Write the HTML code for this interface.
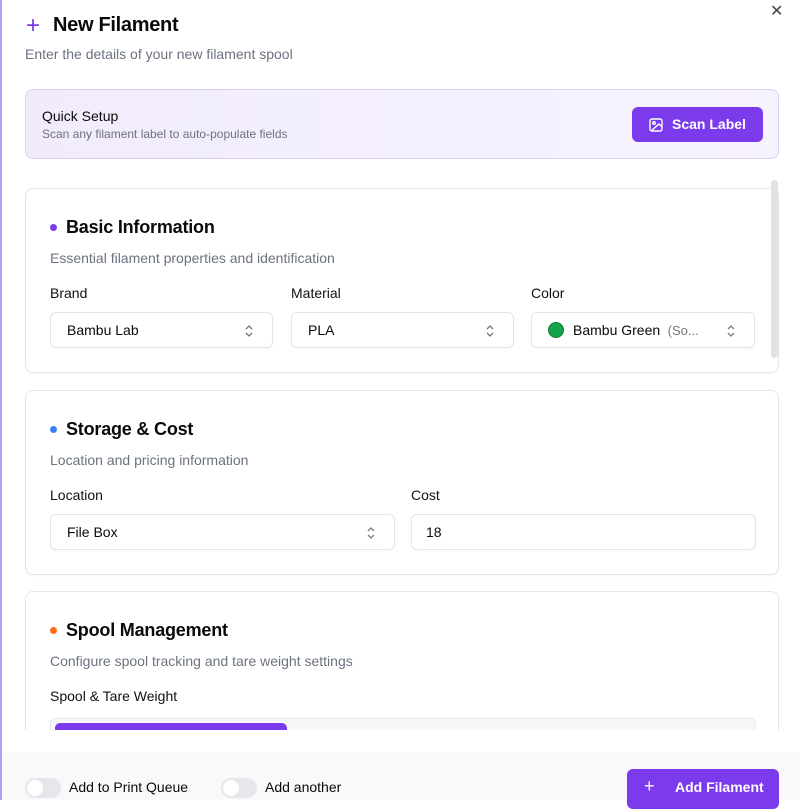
<!DOCTYPE html>
<html><head><meta charset="utf-8"><style>
*{box-sizing:border-box;margin:0;padding:0}
body{width:800px;height:800px;overflow:hidden;background:#fff;font-family:"Liberation Sans",sans-serif;color:#0a0a0a;position:relative}
.abs{position:absolute}
.lb{left:0;top:0;width:2px;height:800px;background:#b79cf2}
.card{position:absolute;left:25px;width:754px;border:1px solid #e6e6ea;border-radius:8px;background:#fff;box-shadow:0 1px 2px rgba(0,0,0,.04)}
.h{position:absolute;left:40px;font-size:18px;font-weight:bold;letter-spacing:-.2px}
.dot{position:absolute;left:24px;width:7px;height:7px;border-radius:50%}
.sub{position:absolute;left:24px;font-size:14px;color:#6b7280}
.lab{position:absolute;font-size:14px;color:#111}
.in{position:absolute;height:36px;border:1px solid #e5e5e8;border-radius:6px;background:#fff;font-size:14px;padding-left:16px;line-height:34px;box-shadow:0 1px 2px rgba(0,0,0,.04)}
.chev{position:absolute;right:18px;top:11px}
.tog{position:absolute;width:36px;height:20px;border-radius:10px;background:#e5e7eb}
.tog::after{content:"";position:absolute;left:2px;top:2px;width:16px;height:16px;border-radius:50%;background:#fff}
</style></head><body>
<div class="abs lb"></div>
<div class="abs" style="left:26px;top:12px;font-size:24px;color:#7c3aed;line-height:28px">+</div>
<div class="abs" style="left:53px;top:14px;font-size:20px;font-weight:bold;letter-spacing:-.3px">New Filament</div>
<div class="abs" style="left:770px;top:1px;font-size:16px;color:#444">✕</div>
<div class="abs" style="left:25px;top:46px;font-size:14px;color:#6b7280">Enter the details of your new filament spool</div>

<div class="abs" style="left:25px;top:89px;width:754px;height:70px;border:1px solid #ddd0f7;border-radius:8px;background:linear-gradient(90deg,#f1ebfd,#f7f3fe)">
  <div class="abs" style="left:16px;top:18px;font-size:14px">Quick Setup</div>
  <div class="abs" style="left:16px;top:37px;font-size:12px;color:#6b7280">Scan any filament label to auto-populate fields</div>
  <div class="abs" style="left:606px;top:17px;width:131px;height:35px;border-radius:6px;background:#7c3aed;color:#fff;font-size:14px;font-weight:bold;line-height:35px;padding-left:40px">Scan Label
    <svg class="abs" style="left:17px;top:11px" width="14" height="14" viewBox="0 0 14 14" fill="none" stroke="#fff" stroke-width="1.4"><rect x="1" y="1" width="12" height="12" rx="2"/><circle cx="5" cy="5" r="1.3"/><path d="M13 9l-3-3-8 7"/></svg>
  </div>
</div>

<div class="card" style="top:188px;height:185px">
  <div class="dot" style="top:35px;background:#7c3aed"></div>
  <div class="h" style="top:28px">Basic Information</div>
  <div class="sub" style="top:61px">Essential filament properties and identification</div>
  <div class="lab" style="left:24px;top:96px">Brand</div>
  <div class="lab" style="left:265px;top:96px">Material</div>
  <div class="lab" style="left:505px;top:96px">Color</div>
  <div class="in" style="left:24px;top:123px;width:223px">Bambu Lab<svg class="chev" width="10" height="14" viewBox="0 0 10 14" fill="none" stroke="#777" stroke-width="1.3"><path d="M2 5l3-3 3 3M2 9l3 3 3-3"/></svg></div>
  <div class="in" style="left:265px;top:123px;width:223px">PLA<svg class="chev" width="10" height="14" viewBox="0 0 10 14" fill="none" stroke="#777" stroke-width="1.3"><path d="M2 5l3-3 3 3M2 9l3 3 3-3"/></svg></div>
  <div class="in" style="left:505px;top:123px;width:224px;padding-left:41px"><span class="abs" style="left:16px;top:9px;width:16px;height:16px;border-radius:50%;background:#16a34a;border:1px solid #0f7a35"></span>Bambu Green <span style="color:#777;font-size:13px">&nbsp;(So...</span><svg class="chev" width="10" height="14" viewBox="0 0 10 14" fill="none" stroke="#777" stroke-width="1.3"><path d="M2 5l3-3 3 3M2 9l3 3 3-3"/></svg></div>
</div>

<div class="card" style="top:390px;height:185px">
  <div class="dot" style="top:35px;background:#3b82f6"></div>
  <div class="h" style="top:28px">Storage &amp; Cost</div>
  <div class="sub" style="top:61px">Location and pricing information</div>
  <div class="lab" style="left:24px;top:96px">Location</div>
  <div class="lab" style="left:385px;top:96px">Cost</div>
  <div class="in" style="left:24px;top:123px;width:345px">File Box<svg class="chev" width="10" height="14" viewBox="0 0 10 14" fill="none" stroke="#777" stroke-width="1.3"><path d="M2 5l3-3 3 3M2 9l3 3 3-3"/></svg></div>
  <div class="in" style="left:385px;top:123px;width:345px;padding-left:14px">18</div>
</div>

<div class="abs" style="left:0;top:591px;width:800px;height:139px;overflow:hidden">
<div class="card" style="top:0;height:200px">
  <div class="dot" style="top:35px;background:#f97316"></div>
  <div class="h" style="top:28px">Spool Management</div>
  <div class="sub" style="top:61px">Configure spool tracking and tare weight settings</div>
  <div class="lab" style="left:24px;top:96px">Spool &amp; Tare Weight</div>
  <div class="abs" style="left:24px;top:126px;width:706px;height:40px;border:1px solid #e8e8ec;border-radius:6px;background:#f8f8fa"><div class="abs" style="left:4px;top:4px;width:232px;height:30px;border-radius:5px;background:#7c3aed"></div></div>
</div>
</div>

<div class="abs" style="left:771px;top:180px;width:7px;height:178px;border-radius:4px;background:#e2e2e6"></div>

<div class="abs" style="left:2px;top:752px;width:798px;height:48px;background:#f9f9fb"></div>
<div class="tog" style="left:25px;top:778px"></div>
<div class="abs" style="left:69px;top:779px;font-size:14px">Add to Print Queue</div>
<div class="tog" style="left:221px;top:778px"></div>
<div class="abs" style="left:265px;top:779px;font-size:14px">Add another</div>
<div class="abs" style="left:627px;top:769px;width:152px;height:40px;border-radius:6px;background:#7c3aed;color:#fff;font-size:14px;font-weight:bold;padding:10px 0 0 48px">Add Filament<span class="abs" style="left:17px;top:7px;font-size:18px;font-weight:normal">+</span></div>
</body></html>
